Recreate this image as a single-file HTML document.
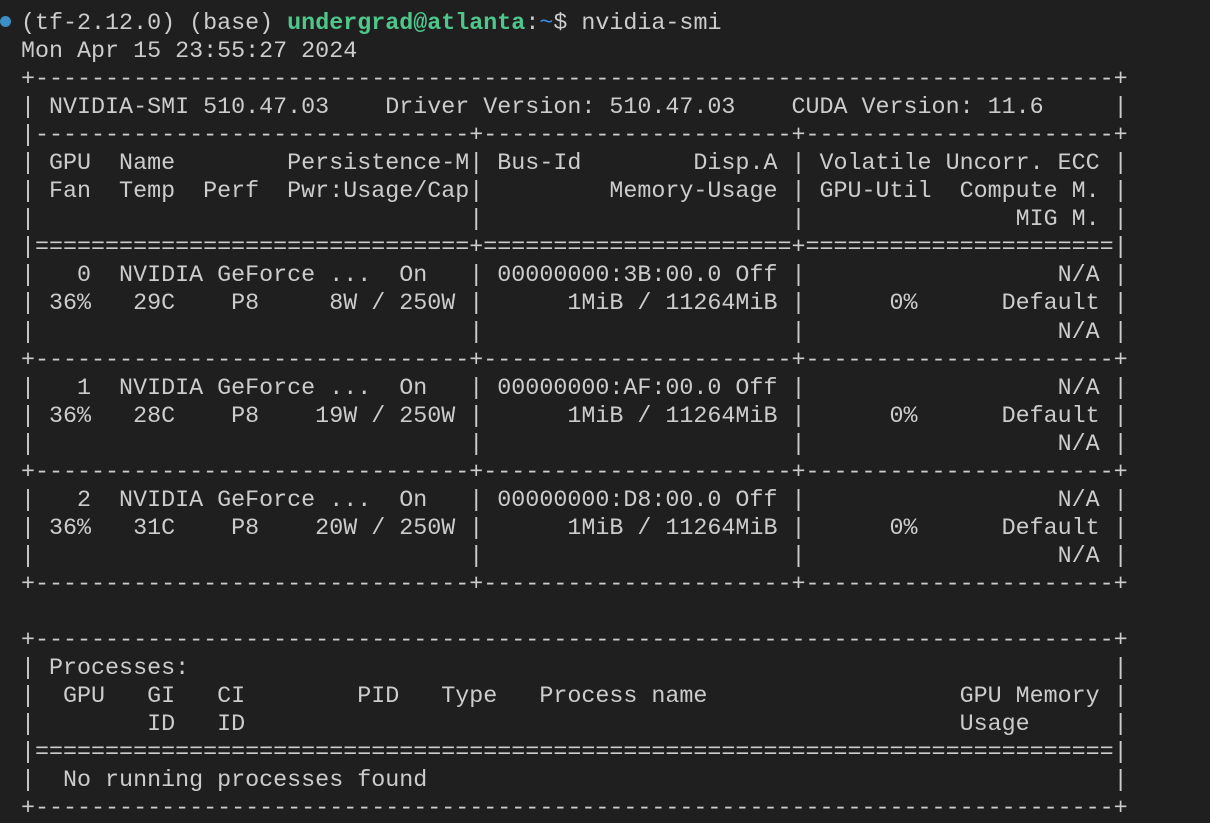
<!DOCTYPE html>
<html><head><style>
html,body{margin:0;padding:0;background:#1f1f1f;width:1210px;height:816px;overflow:hidden}
pre{position:absolute;left:21px;top:10px;margin:0;font-family:"Liberation Mono",monospace;font-size:23.35px;line-height:28.05px;color:#cccccc}
.g{color:#4fc78a;font-weight:bold}.b{color:#3b8eea}
.dot{position:absolute;left:0;top:16px;width:11px;height:11px;border-radius:50%;background:#3a8fc5}
</style></head><body>
<div class="dot"></div>
<pre>(tf-2.12.0) (base) <span class="g">undergrad@atlanta</span>:<span class="b">~</span>$ nvidia-smi
Mon Apr 15 23:55:27 2024
+-----------------------------------------------------------------------------+
| NVIDIA-SMI 510.47.03    Driver Version: 510.47.03    CUDA Version: 11.6     |
|-------------------------------+----------------------+----------------------+
| GPU  Name        Persistence-M| Bus-Id        Disp.A | Volatile Uncorr. ECC |
| Fan  Temp  Perf  Pwr:Usage/Cap|         Memory-Usage | GPU-Util  Compute M. |
|                               |                      |               MIG M. |
|===============================+======================+======================|
|   0  NVIDIA GeForce ...  On   | 00000000:3B:00.0 Off |                  N/A |
| 36%   29C    P8     8W / 250W |      1MiB / 11264MiB |      0%      Default |
|                               |                      |                  N/A |
+-------------------------------+----------------------+----------------------+
|   1  NVIDIA GeForce ...  On   | 00000000:AF:00.0 Off |                  N/A |
| 36%   28C    P8    19W / 250W |      1MiB / 11264MiB |      0%      Default |
|                               |                      |                  N/A |
+-------------------------------+----------------------+----------------------+
|   2  NVIDIA GeForce ...  On   | 00000000:D8:00.0 Off |                  N/A |
| 36%   31C    P8    20W / 250W |      1MiB / 11264MiB |      0%      Default |
|                               |                      |                  N/A |
+-------------------------------+----------------------+----------------------+

+-----------------------------------------------------------------------------+
| Processes:                                                                  |
|  GPU   GI   CI        PID   Type   Process name                  GPU Memory |
|        ID   ID                                                   Usage      |
|=============================================================================|
|  No running processes found                                                 |
+-----------------------------------------------------------------------------+</pre>
</body></html>
